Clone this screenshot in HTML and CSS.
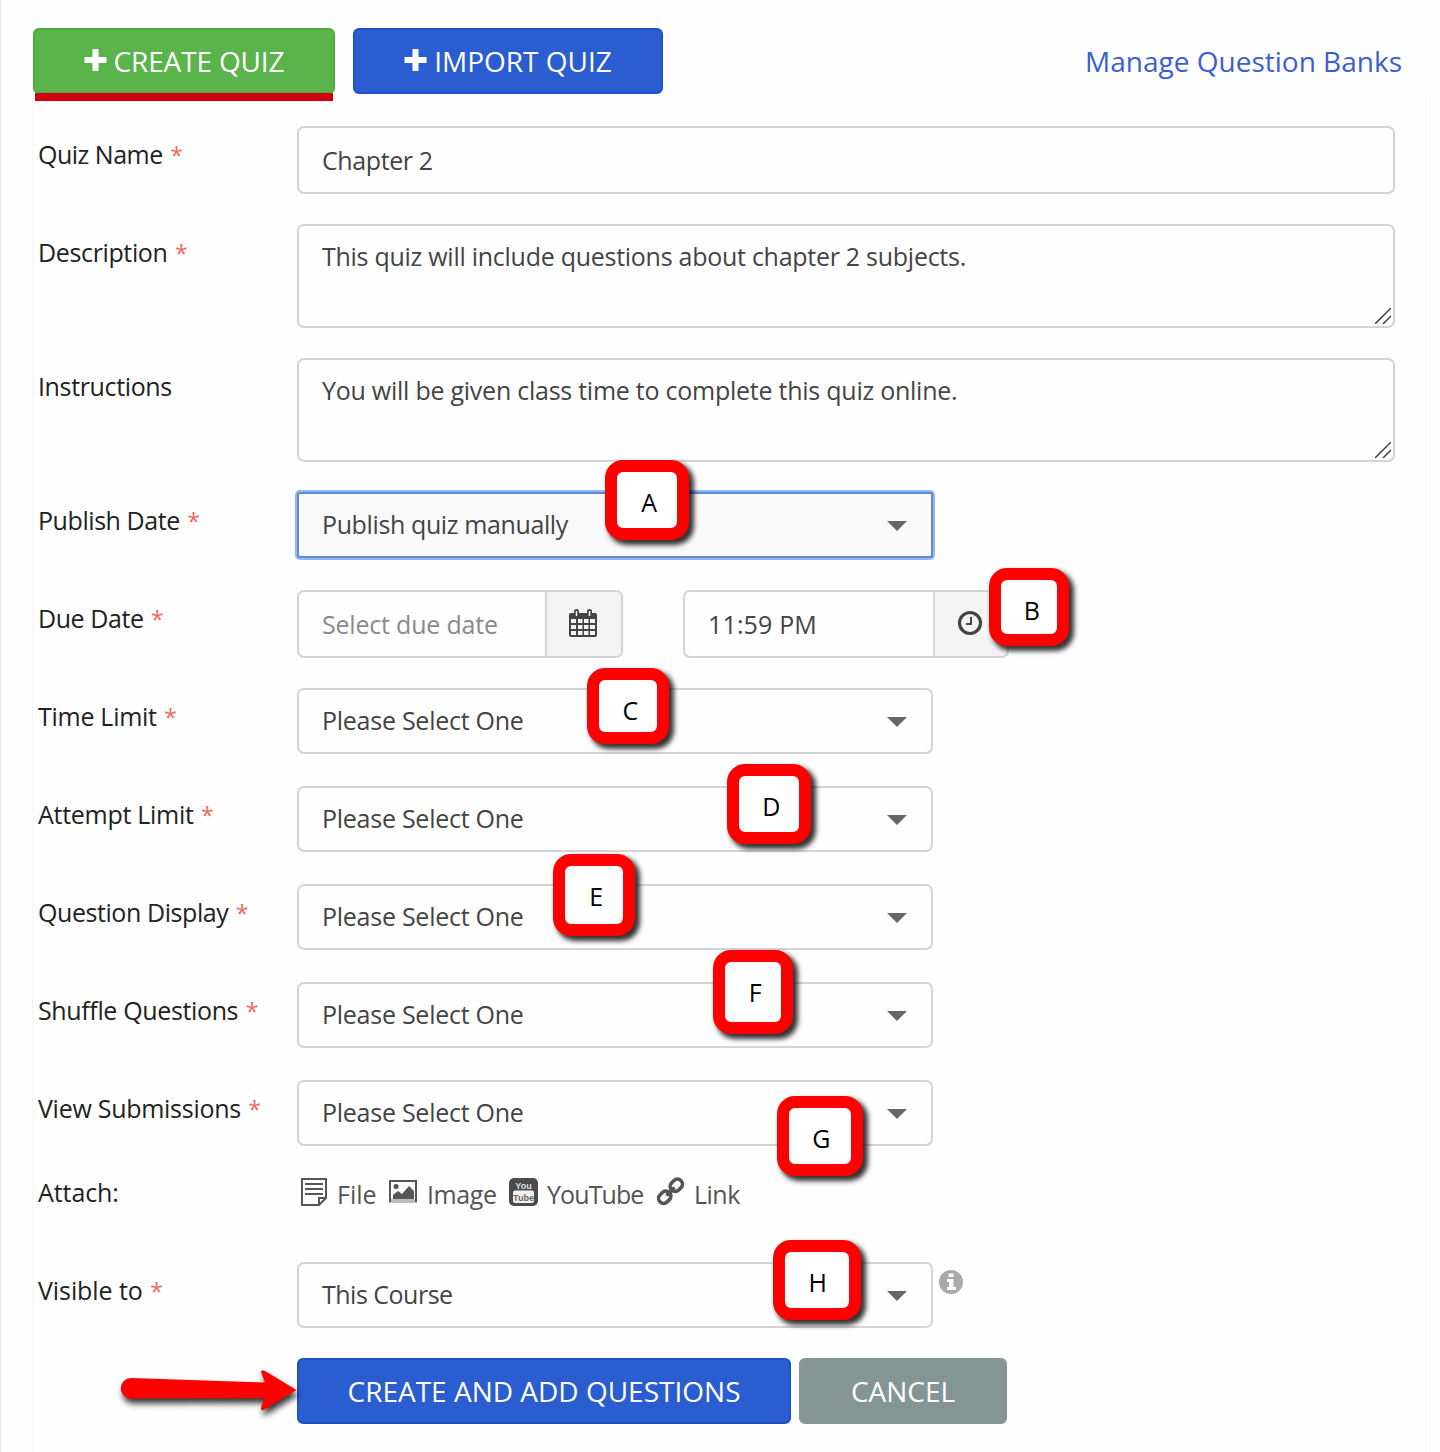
FILE: index.html
```html
<!DOCTYPE html>
<html lang="en">
<head>
<meta charset="utf-8">
<title>Create Quiz</title>
<link rel="stylesheet" href="styles.css">
</head>
<body>
<main class="page">
  <header class="toolbar">
    <button class="btn btn-green"><svg class="plus" viewBox="0 0 22 22"><path d="M8 0h6v8h8v6h-8v8H8v-8H0V8h8z"/></svg><span class="t-create">CREATE QUIZ</span></button>
    <button class="btn btn-blue btn-import"><svg class="plus" viewBox="0 0 22 22"><path d="M8 0h6v8h8v6h-8v8H8v-8H0V8h8z"/></svg><span>IMPORT QUIZ</span></button>
    <a class="banks">Manage Question Banks</a>
  </header>
  <form class="panel">
    <div class="row"><label><span class="l1">Quiz Name</span> <i>*</i></label><div class="field input"><span class="v1">Chapter 2</span></div></div>
    <div class="row row-tall"><label><span class="l2">Description</span> <i>*</i></label><div class="field area"><span class="v2">This quiz will include questions about chapter 2 subjects.</span><svg class="grip" viewBox="0 0 16 16"><path d="M0 16L16 0M8 16L16 8"/></svg></div></div>
    <div class="row row-tall"><label><span class="l3">Instructions</span></label><div class="field area"><span class="v3">You will be given class time to complete this quiz online.</span><svg class="grip" viewBox="0 0 16 16"><path d="M0 16L16 0M8 16L16 8"/></svg></div></div>
    <div class="row"><label><span class="l4">Publish Date</span> <i>*</i></label><div class="field select focused"><span class="v4">Publish quiz manually</span><b class="caret"></b></div></div>
    <div class="row"><label><span class="l5">Due Date</span> <i>*</i></label>
      <div class="dates">
        <div class="field input group date"><span class="v5">Select due date</span><div class="addon"><svg width="28" height="28" viewBox="0 0 28 28"><path fill="#444" fill-rule="evenodd" d="M2 4h3V2q0-2 2.500-2T10 2v2h8V2q0-2 2.500-2T23 2v2h3q2 0 2 2v20q0 2-2 2H2q-2 0-2-2V6q0-2 2-2zM2 10v4h5v-4zm7 0v4h4.500v-4zm6 0v4h4.500v-4zm6 0v4h5v-4zM2 16v4h5v-4zm7 0v4h4.500v-4zm6 0v4h4.500v-4zm6 0v4h5v-4zM2 22v4h5v-4zm7 0v4h4.500v-4zm6 0v4h4.500v-4zm6 0v4h5v-4z"/><path stroke="#f4f4f4" stroke-width="1.500" d="M7.500 2v5M20.500 2v5"/></svg></div></div>
        <div class="field input group time"><span class="v6">11:59 PM</span><div class="addon"><svg width="26" height="26" viewBox="0 0 26 26" fill="none" stroke="#444"><circle cx="13" cy="13" r="10.500" stroke-width="3.200"/><path d="M14 7v7H9" stroke-width="2"/></svg></div></div>
      </div></div>
    <div class="row"><label><span class="l6">Time Limit</span> <i>*</i></label><div class="field select"><span class="v7">Please Select One</span><b class="caret"></b></div></div>
    <div class="row"><label><span class="l7">Attempt Limit</span> <i>*</i></label><div class="field select"><span class="v7">Please Select One</span><b class="caret"></b></div></div>
    <div class="row"><label><span class="l8">Question Display</span> <i>*</i></label><div class="field select"><span class="v7">Please Select One</span><b class="caret"></b></div></div>
    <div class="row"><label><span class="l9">Shuffle Questions</span> <i>*</i></label><div class="field select"><span class="v7">Please Select One</span><b class="caret"></b></div></div>
    <div class="row row-last-select"><label><span class="l10">View Submissions</span> <i>*</i></label><div class="field select"><span class="v7">Please Select One</span><b class="caret"></b></div></div>
    <div class="row"><label><span class="l11">Attach:</span></label>
      <div class="attach">
        <svg class="ico" width="28" height="28" viewBox="0 0 28 28" fill="none" stroke="#555" stroke-width="2"><path d="M2 1h24v19l-7 7H2zM26 20h-7v7"/><path d="M5 6h18M5 11h18M5 16h18"/></svg><span class="a1">File</span>
        <svg class="ico" width="30" height="28" viewBox="0 0 30 28"><path fill="#bbb" d="M1 21h28v4H1z"/><path fill="none" stroke="#555" stroke-width="2" d="M2 24V3h26v21"/><path fill="#555" d="M5 21v-4l5-4 4 3 7-8 5 5v8z"/><circle cx="8" cy="8.500" r="2.500" fill="#555"/></svg><span class="a2">Image</span>
        <svg class="ico" width="29" height="28" viewBox="0 0 29 28"><rect width="29" height="28" rx="5" fill="#4c4c4c"/><rect x="4" y="12.500" width="21" height="12.500" rx="2" fill="#f2f2f2"/><text x="14.500" y="10.500" class="yt" fill="#ddd">You</text><text x="14.500" y="23" class="yt" fill="#666">Tube</text></svg><span class="a3">YouTube</span>
        <svg class="ico" width="29" height="29" viewBox="0 0 29 29" fill="none" stroke="#555" stroke-width="3.600"><rect x="-6.500" y="-5" width="13" height="10" rx="4.800" transform="translate(20.300 8.300) rotate(-45)"/><rect x="-6.500" y="-5" width="13" height="10" rx="4.800" transform="translate(8.700 20.300) rotate(-45)"/><path d="M10.500 18.500l8-8"/></svg><span class="a4">Link</span>
      </div></div>
    <div class="row"><label><span class="l12">Visible to</span> <i>*</i></label><div class="visible"><div class="field select"><span class="v8">This Course</span><b class="caret"></b></div><svg class="info" width="24" height="24" viewBox="0 0 24 24"><circle cx="12" cy="12" r="12" fill="#aaa"/><path fill="#fff" d="M9.500 3.500h5v3.500h-5zM8 9h6.500v8H17v3H8v-3h2v-5H8z"/></svg></div></div>
    <div class="actions"><button class="btn btn-blue btn-add"><span>CREATE AND ADD QUESTIONS</span></button><button class="btn btn-gray"><span>CANCEL</span></button></div>
  </form>
  <div class="underline"></div>
  <div class="mark ma">A</div><div class="mark mb">B</div><div class="mark mc">C</div><div class="mark md">D</div>
  <div class="mark me">E</div><div class="mark mf">F</div><div class="mark mg">G</div><div class="mark mh">H</div>
  <svg class="arrow" width="190" height="60" viewBox="0 0 190 60"><path d="M16 18L150 22.500L146 12Q146 9 150 11L181.500 30L150 49Q146 52 146 48L149 38L16 38.500A10.200 10.200 0 0 1 16 18Z" fill="#f00"/></svg>
</main>
</body>
</html>
```
FILE: styles.css
```css
* { box-sizing: border-box; }
body { margin: 0; background: #fefefe; font-family: "Open Sans", sans-serif; }
.page { position: relative; width: 1440px; height: 1452px; padding: 28px 10px 0 31px; border-left: 1px solid #e6e6e6; overflow: hidden; }
.toolbar { display: flex; align-items: center; height: 66px; margin-left: 1px; }
.btn { display: flex; align-items: center; justify-content: center; height: 66px; padding: 0; border: 2px solid; border-radius: 6px; color: #fff; font: 28px "Open Sans", sans-serif; white-space: nowrap; }
.btn-green { width: 302px; background: #5ab34b; border-color: #4dab3d; }
.btn-blue { background: #2a5dd0; border-color: #1f50c4; }
.btn-import { width: 310px; margin-left: 18px; }
.t-create { letter-spacing: -.15px; }
.plus { width: 23px; height: 22px; margin: -2px 7px 0 0; fill: #fff; }
.banks { margin-left: auto; margin-right: 28px; color: #3a5fd2; font-size: 28px; white-space: nowrap; }
.panel { width: 1398px; margin-top: 4px; padding: 28px 0 0 5px; border-left: 1px solid #f7f7f7; border-right: 1px solid #f7f7f7; height: 1360px; }
.row { display: grid; grid-template-columns: 259px 1098px; align-items: start; height: 98px; }
.row-tall { height: 134px; }
.row-last-select { height: 84px; }
label { height: 58px; line-height: 56px; font-size: 25px; color: #222; white-space: nowrap; }
label i { font-style: normal; font-size: 23px; color: #ea6b5c; margin-left: 1px; }
.field { position: relative; border: 2px solid #d4d4d4; border-radius: 7px; padding-left: 23px; font-size: 25px; color: #444; background: #fefefe; white-space: nowrap; }
.input { height: 68px; line-height: 64px; }
.area { height: 104px; line-height: 60px; }
.grip { position: absolute; right: 2px; bottom: 2px; width: 16px; height: 16px; fill: none; stroke: #333; stroke-width: 1.400; }
.select { display: flex; align-items: center; justify-content: space-between; width: 636px; height: 66px; padding-right: 24px; padding-bottom: 2px; }
.focused { background: #fafafa; border-color: #638ad0; box-shadow: 0 0 0 2px #93b5fa; border-radius: 3px; }
.caret { border: 10px solid transparent; border-top-color: #666; border-bottom: 0; margin-top: 4px; }
.dates { display: flex; gap: 60px; }
.group { display: flex; justify-content: space-between; width: 326px; }
.date { color: #8a8a8a; }
.addon { display: flex; align-items: center; justify-content: center; width: 76px; padding: 0 2px 2px 0; border-left: 2px solid #d4d4d4; background: #f4f4f4; border-radius: 0 5px 5px 0; }
.time .addon { width: 74px; }
.attach { display: flex; align-items: center; height: 58px; padding-left: 3px; color: #555; font-size: 25px; line-height: 34px; }
.ico { margin: -3px 9px 0 0; }
.attach span { padding-top: 2px; margin-right: 12px; white-space: nowrap; }
.l1 { letter-spacing: -.5px; }
.l2, .l3, .l9 { letter-spacing: -.36px; }
.l4, .l5, .l8 { letter-spacing: -.43px; }
.l6, .l7, .l10 { letter-spacing: -.28px; }
.l11, .l12 { letter-spacing: -.08px; }
.v1 { letter-spacing: -.4px; }
.v2 { letter-spacing: -.27px; }
.v3 { letter-spacing: -.25px; }
.v4 { letter-spacing: -.38px; }
.v5 { letter-spacing: -.2px; }
.v6 { letter-spacing: .15px; }
.v7 { letter-spacing: -.26px; }
.v8 { letter-spacing: -.5px; }
.attach .a1 { width: 42px; margin-right: 9px; }
.attach .a2 { width: 71px; margin-right: 11px; letter-spacing: -.4px; }
.attach .a3 { width: 97px; letter-spacing: -.9px; }
.attach .a4 { letter-spacing: -.5px; }
.yt { font: bold 9px "Liberation Sans", sans-serif; text-anchor: middle; }
.visible { display: flex; gap: 6px; }
.info { margin-top: 8px; }
.actions { display: flex; gap: 8px; margin: -2px 0 0 259px; }
.btn-add { width: 494px; }
.btn-gray { width: 208px; background: #839693; border-color: #839693; }
.underline { position: absolute; left: 34px; top: 93px; width: 298px; height: 8px; background: #d0000f; }
.mark { position: absolute; display: flex; align-items: center; justify-content: center; border: 12px solid #f00; border-radius: 18px; background: #fff; box-shadow: 4px 4px 5px 1px rgba(0,0,0,.8); font-size: 25px; letter-spacing: -.5px; color: #000; padding: 4px 0 0 4px; }
.ma { left: 604px; top: 460px; width: 84px; height: 80px; }
.mb { left: 988px; top: 568px; width: 80px; height: 78px; padding: 6px 0 0 5px; }
.mc { left: 586px; top: 668px; width: 82px; height: 76px; padding-top: 7px; }
.md { left: 726px; top: 764px; width: 84px; height: 80px; }
.me { left: 552px; top: 854px; width: 82px; height: 82px; padding-top: 2px; }
.mf { left: 712px; top: 950px; width: 80px; height: 84px; padding-top: 0; }
.mg { left: 776px; top: 1096px; width: 86px; height: 80px; padding-left: 2px; }
.mh { left: 772px; top: 1240px; width: 88px; height: 80px; padding-left: 1px; }
.arrow { position: absolute; left: 114px; top: 1360px; filter: drop-shadow(2px 5px 3px rgba(0,0,0,.8)); }
```
